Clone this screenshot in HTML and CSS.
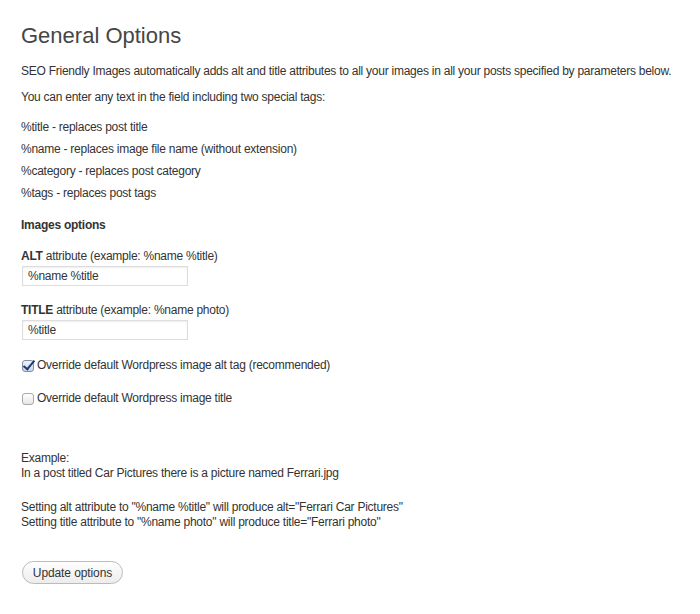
FILE: index.html
```html
<!DOCTYPE html>
<html lang="en">
<head>
    <meta charset="UTF-8">
    <title>SEO Friendly Images - General Options</title>
    <link rel="stylesheet" href="styles.css">
</head>
<body>
    <div class="wrap">
        <h2>General Options</h2>
        <p class="intro">SEO Friendly Images automatically adds alt and title attributes to all your images in all your posts specified by parameters below.</p>
        <p class="intro second">You can enter any text in the field including two special tags:</p>

        <ul class="tags">
            <li>%title - replaces post title</li>
            <li>%name - replaces image file name (without extension)</li>
            <li>%category - replaces post category</li>
            <li>%tags - replaces post tags</li>
        </ul>

        <h4>Images options</h4>

        <form>
            <div class="field">
                <label for="altText"><b>ALT</b> attribute (example: %name %title)</label>
                <input type="text" id="altText" value="%name %title">
            </div>
            <div class="field">
                <label for="titleText"><b>TITLE</b> attribute (example: %name photo)</label>
                <input type="text" id="titleText" value="%title">
            </div>

            <label class="check"><input type="checkbox" checked> Override default Wordpress image alt tag (recommended)</label>
            <label class="check"><input type="checkbox"> Override default Wordpress image title</label>

            <p class="example">Example:<br>In a post titled Car Pictures there is a picture named Ferrari.jpg</p>
            <p class="example result">Setting alt attribute to "%name %title" will produce alt="Ferrari Car Pictures"<br>Setting title attribute to "%name photo" will produce title="Ferrari photo"</p>

            <button type="button" class="button">Update options</button>
        </form>
    </div>
</body>
</html>
```

FILE: styles.css
```css
body {
    margin: 0;
    background-color: #ffffff;
    font-family: "Liberation Sans", Arial, sans-serif;
    font-size: 12px;
    line-height: 15px;
    letter-spacing: -0.25px;
    color: #333333;
}

.wrap {
    padding: 22px 0 0 21px;
}

h2 {
    margin: 0;
    font-size: 22px;
    line-height: 27px;
    font-weight: normal;
    letter-spacing: 0;
    color: #464646;
}

p {
    margin: 0;
}

.intro {
    margin-top: 15px;
    white-space: nowrap;
}

.intro.second {
    margin-top: 11px;
}

.tags {
    list-style: none;
    margin: 15px 0 0;
    padding: 0;
}

.tags li {
    margin-bottom: 7px;
}

.tags li:last-child {
    margin-bottom: 0;
}

h4 {
    margin: 17px 0 0;
    font-size: 12px;
    line-height: 15px;
    font-weight: bold;
}

.field {
    margin-top: 16px;
}

.field + .field {
    margin-top: 17px;
}

.field label {
    display: block;
    margin-bottom: 2px;
}

.field input {
    display: block;
    box-sizing: border-box;
    width: 166px;
    height: 20px;
    margin: 0 0 0 1px;
    padding: 0 5px;
    border: 1px solid #dddddd;
    background: #ffffff;
    box-shadow: inset 0 1px 2px rgba(0, 0, 0, 0.07);
    font-family: "Liberation Sans", Arial, sans-serif;
    font-size: 12px;
    letter-spacing: -0.25px;
    color: #333333;
}

.check {
    display: flex;
    align-items: center;
    gap: 3px;
    margin-top: 18px;
}

.check + .check {
    margin-top: 18px;
}

.check input {
    appearance: none;
    -webkit-appearance: none;
    position: relative;
    width: 12px;
    height: 12px;
    margin: 1px 0 0 1px;
    border: 1px solid #a8a8a8;
    border-radius: 3px;
    background: linear-gradient(#ffffff, #e6e6e6);
    box-sizing: border-box;
}

.check input:checked {
    border-color: #7f8fa8;
    background: linear-gradient(#eef3fb, #c9d6ec);
}

.check input:checked::after {
    content: "";
    position: absolute;
    left: 3px;
    top: -3px;
    width: 4px;
    height: 10px;
    border-right: 2px solid #1c3a73;
    border-bottom: 2px solid #1c3a73;
    transform: rotate(40deg);
}

.example {
    margin-top: 45px;
}

.example.result {
    margin-top: 19px;
}

.button {
    display: block;
    box-sizing: border-box;
    width: 101px;
    height: 23px;
    margin-top: 31px;
    margin-left: 1px;
    padding: 0;
    border: 1px solid #bbbbbb;
    border-radius: 12px;
    background: linear-gradient(#ffffff, #ececec);
    font-family: "Liberation Sans", Arial, sans-serif;
    font-size: 12px;
    letter-spacing: -0.1px;
    color: #333333;
}
```
